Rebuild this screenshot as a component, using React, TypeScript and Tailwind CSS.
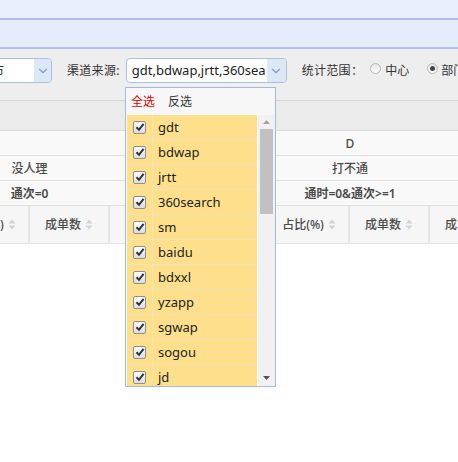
import { ChevronDown } from 'lucide-react';

const channels = ['gdt', 'bdwap', 'jrtt', '360search', 'sm', 'baidu', 'bdxxl', 'yzapp', 'sgwap', 'sogou', 'jd'];
const sortCols = ['数', '占比(%)', '成单数', '成单率', '数', '占比(%)', '成单数', '成单率'];

function SortIcon() {
  return (
    <svg width="8" height="11" viewBox="0 0 8 11" className="ml-[4px] shrink-0">
      <path d="M4 0.5 L7.5 4.5 L0.5 4.5 Z" fill="#d3d3d3" />
      <path d="M4 10.5 L7.5 6.5 L0.5 6.5 Z" fill="#d3d3d3" />
    </svg>
  );
}

function Check() {
  return (
    <span className="w-[13px] h-[13px] rounded-[2px] border border-[#8f8f8f] bg-gradient-to-b from-white to-[#dcdcdc] flex items-center justify-center">
      <svg width="10" height="10" viewBox="0 0 10 10">
        <path d="M1.5 5.2 L4 7.8 L8.6 1.8" stroke="#2b3440" strokeWidth="2" fill="none" />
      </svg>
    </span>
  );
}

function Radio({ on }: { on?: boolean }) {
  return (
    <span className="w-[11px] h-[11px] rounded-full border border-[#b8b8b8] bg-gradient-to-b from-[#e4e4e4] to-white flex items-center justify-center">
      {on && <span className="w-[5px] h-[5px] rounded-full bg-[#444]" />}
    </span>
  );
}

export default function App() {
  return (
    <div className="w-[458px] h-[462px] bg-white overflow-hidden relative text-[12px] text-[#333] font-['Noto_Sans','Noto_Sans_CJK_SC',sans-serif]">
      <div className="h-[20px] bg-[#e9effc] border-b-2 border-[#aebde8]" />
      <div className="h-[29px] bg-[#e4ebfb] border-b-2 border-[#b2bfe8]" />

      <div className="h-[52px] bg-[#efeeef] border-b border-[#d4d4d4] pt-[9px] flex items-start whitespace-nowrap">
        <div className="w-[53px] h-[25px] shrink-0 -ml-[1px] border border-[#aac0de] rounded-r-[4px] bg-white flex overflow-hidden">
          <span className="flex-1 leading-[23px] text-[13px] -ml-[9px]">市</span>
          <span className="w-[17px] bg-[#dde8f6] flex items-center justify-center">
            <ChevronDown size={14} strokeWidth={2} className="text-[#7d9cc4]" />
          </span>
        </div>
        <span className="ml-[15px] shrink-0 leading-[25px] tracking-[0.3px]">渠道来源:</span>
        <div className="ml-[6px] w-[161px] h-[25px] shrink-0 border border-[#aac0de] rounded-[4px] bg-white flex overflow-hidden">
          <span className="flex-1 pl-[5px] leading-[23px] text-[13px] text-[#222] overflow-hidden">gdt,bdwap,jrtt,360sea</span>
          <span className="w-[19px] bg-[#dde8f6] flex items-center justify-center">
            <ChevronDown size={14} strokeWidth={2} className="text-[#7d9cc4]" />
          </span>
        </div>
        <span className="ml-[15px] shrink-0 leading-[25px] tracking-[0.3px]">统计范围：</span>
        <span className="ml-[7px] shrink-0 h-[21px] flex items-center"><Radio /></span>
        <span className="ml-[4px] shrink-0 leading-[25px]">中心</span>
        <span className="ml-[18px] shrink-0 h-[21px] flex items-center"><Radio on /></span>
        <span className="ml-[3px] shrink-0 leading-[25px]">部门</span>
      </div>

      <div className="h-[30px] bg-[#ebebeb] border-b border-[#dcdcdc]" />

      <div className="-ml-[130px] w-[640px] text-[#4a4a4a]">
        {[
          ['', 'D'],
          ['没人理', '打不通'],
          ['通次=0', '通时=0&通次>=1'],
        ].map((r, i) => (
          <div key={i} className="flex h-[25px] bg-[#f9f9f9] border-b border-[#e0e0e0]">
            <div className={`w-[320px] border-r border-[#e0e0e0] text-center leading-[25px] ${i === 2 ? 'font-semibold' : 'font-medium'}`}>{r[0]}</div>
            <div className={`w-[320px] text-center leading-[25px] ${i === 2 ? 'font-semibold' : 'font-medium'}`}>{r[1]}</div>
          </div>
        ))}
        <div className="flex h-[38px] bg-[#f6f6f6] border-b border-[#e3e3e3]">
          {sortCols.map((c, i) => (
            <div key={i} className="w-[80px] border-r-2 border-[#e6e6e6] flex items-center justify-center whitespace-nowrap font-medium">
              <span>{c}</span>
              <SortIcon />
            </div>
          ))}
        </div>
      </div>

      <div className="absolute left-[125px] top-[87px] w-[151px] h-[300px] border border-[#a9b8d8] bg-white flex flex-col">
        <div className="h-[27px] bg-[#f7f7f7] flex items-center pl-[5px] gap-[13px]">
          <span className="text-[#e00000]">全选</span>
          <span className="text-[#333]">反选</span>
        </div>
        <div className="flex-1 flex overflow-hidden">
          <div className="w-[131px] pl-[1px]">
            {channels.map((c) => (
              <div key={c} className="flex h-[25px] border-b border-[#f3e3b4] bg-[#fee08c]">
                <div className="w-[26px] border-r border-[#f5e3b0] flex items-center justify-center">
                  <Check />
                </div>
                <span className="pl-[5px] leading-[24px] text-[13px] text-[#222]">{c}</span>
              </div>
            ))}
          </div>
          <div className="w-[17px] ml-[1px] bg-[#f1f1f1] flex flex-col items-center">
            <svg width="9" height="14" viewBox="0 0 9 14"><path d="M4.5 5 L8 9 L1 9 Z" fill="#a3a3a3" /></svg>
            <div className="w-[13px] h-[85px] bg-[#c1c1c1]" />
            <div className="flex-1" />
            <svg width="9" height="14" viewBox="0 0 9 14" className="mb-[1px]"><path d="M4.5 9 L8 5 L1 5 Z" fill="#505050" /></svg>
          </div>
        </div>
      </div>
    </div>
  );
}
